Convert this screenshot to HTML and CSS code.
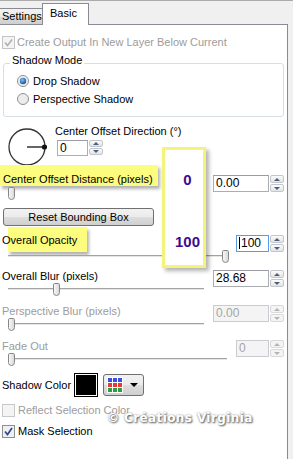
FILE: index.html
```html
<!DOCTYPE html>
<html lang="en">
  <head>
    <meta charset="UTF-8" />
    <title>Drop Shadow - Basic</title>
    <link rel="stylesheet" href="styles.css">
  </head>
  <body>
    <div class="tabs">
      <div class="tab">Settings</div>
      <div class="tab active">Basic</div>
    </div>
    <section class="panel">
      <div class="check-row disabled">
        <svg class="cb" width="13" height="13" viewBox="0 0 13 13">
          <rect x="0.5" y="0.5" width="12" height="12" fill="#f4f4f4" stroke="#c4c4c4" />
          <path d="M3 6.5l2.5 3 4.5-6" fill="none" stroke="#b0b0b0" stroke-width="1.6" />
        </svg>
        <span>Create Output In New Layer Below Current</span>
      </div>

      <fieldset class="group">
        <legend>Shadow Mode</legend>
        <div class="radio-row first">
          <svg class="rb" width="12" height="12" viewBox="0 0 12 12">
            <defs>
              <radialGradient id="dot" cx="0.4" cy="0.35" r="0.7">
                <stop offset="0" stop-color="#7ec0f5" />
                <stop offset="1" stop-color="#0d4d96" />
              </radialGradient>
            </defs>
            <circle cx="6" cy="6" r="5.5" fill="#f1f1f1" stroke="#8e8f8f" />
            <circle cx="6" cy="6" r="3.2" fill="url(#dot)" />
          </svg>
          <span>Drop Shadow</span>
        </div>
        <div class="radio-row">
          <svg class="rb" width="12" height="12" viewBox="0 0 12 12">
            <circle cx="6" cy="6" r="5.5" fill="#ececec" stroke="#8e8f8f" />
          </svg>
          <span>Perspective Shadow</span>
        </div>
      </fieldset>

      <div class="dial-row">
        <svg class="dial" width="40" height="40" viewBox="0 0 40 40">
          <circle cx="20" cy="20" r="18" fill="none" stroke="#333" stroke-width="1.3" />
          <line x1="20" y1="20" x2="38" y2="20" stroke="#333" stroke-width="1.5" />
          <circle cx="37.5" cy="20" r="2.6" fill="#111" />
        </svg>
        <div class="dial-col">
          <div>Center Offset Direction (°)</div>
          <div class="spin dial-spin">
            <div class="field w31">0</div>
            <div class="arrows"><span class="arr up"></span><span class="arr down"></span></div>
          </div>
        </div>
      </div>

      <div class="srow">
        <div class="scol">
          <div class="hl hl-dist">Center Offset Distance (pixels)</div>
          <div class="slider bare">
            <div class="thumb" style="left: 0px"></div>
          </div>
        </div>
        <div class="spin dist-spin">
          <div class="field w56">0.00</div>
          <div class="arrows"><span class="arr up"></span><span class="arr down"></span></div>
        </div>
      </div>

      <button class="btn-reset" type="button">Reset Bounding Box</button>

      <div class="srow op-row">
        <div class="scol">
          <div class="hl hl-op">Overall Opacity</div>
          <div class="slider op-slider">
            <div class="track"></div>
            <div class="thumb" style="left: 214px"></div>
          </div>
        </div>
        <div class="spin op-spin">
          <div class="field w33 focus"><span class="caret"></span>100</div>
          <div class="arrows"><span class="arr up"></span><span class="arr down"></span></div>
        </div>
      </div>

      <div class="srow blur-row">
        <div class="scol">
          <div class="slbl">Overall Blur (pixels)</div>
          <div class="slider">
            <div class="track"></div>
            <div class="thumb" style="left: 45px"></div>
          </div>
        </div>
        <div class="spin">
          <div class="field w56">28.68</div>
          <div class="arrows"><span class="arr up"></span><span class="arr down"></span></div>
        </div>
      </div>

      <div class="srow next-row disabled">
        <div class="scol">
          <div class="slbl">Perspective Blur (pixels)</div>
          <div class="slider">
            <div class="track"></div>
            <div class="thumb" style="left: 0px"></div>
          </div>
        </div>
        <div class="spin off">
          <div class="field w56">0.00</div>
          <div class="arrows"><span class="arr up"></span><span class="arr down"></span></div>
        </div>
      </div>

      <div class="srow next-row disabled">
        <div class="scol">
          <div class="slbl">Fade Out</div>
          <div class="slider">
            <div class="track"></div>
            <div class="thumb" style="left: 0px"></div>
          </div>
        </div>
        <div class="spin off">
          <div class="field w33">0</div>
          <div class="arrows"><span class="arr up"></span><span class="arr down"></span></div>
        </div>
      </div>

      <div class="color-row">
        <span class="color-lbl">Shadow Color</span>
        <div class="swatch"></div>
        <button class="pal" type="button">
          <svg width="16" height="16" viewBox="0 0 16 16">
            <rect width="16" height="16" fill="#fff" />
            <rect x="1" y="1" width="4" height="4" fill="#3d4fe0" />
            <rect x="6" y="1" width="4" height="4" fill="#3d4fe0" />
            <rect x="11" y="1" width="4" height="4" fill="#3d4fe0" />
            <rect x="1" y="6" width="4" height="4" fill="#e8383b" />
            <rect x="6" y="6" width="4" height="4" fill="#e8383b" />
            <rect x="11" y="6" width="4" height="4" fill="#e8383b" />
            <rect x="1" y="11" width="4" height="4" fill="#2f9e3c" />
            <rect x="6" y="11" width="4" height="4" fill="#2f9e3c" />
            <rect x="11" y="11" width="4" height="4" fill="#2f9e3c" />
          </svg>
          <span class="drop"></span>
        </button>
      </div>

      <div class="check-row reflect disabled">
        <svg class="cb" width="13" height="13" viewBox="0 0 13 13">
          <rect x="0.5" y="0.5" width="12" height="12" fill="#f4f4f4" stroke="#c8c8c8" />
        </svg>
        <span>Reflect Selection Color</span>
      </div>
      <div class="check-row mask">
        <svg class="cb" width="13" height="13" viewBox="0 0 13 13">
          <rect x="0.5" y="0.5" width="12" height="12" fill="#eef0f3" stroke="#8e8f8f" />
          <path d="M3 6.5l2.5 3 4.5-6.5" fill="none" stroke="#2f4a8c" stroke-width="1.7" />
        </svg>
        <span>Mask Selection</span>
      </div>

      <div class="callout">
        <div>0</div>
        <div class="v2">100</div>
      </div>
      <div class="mark">© Créations Virginia</div>
    </section>
  </body>
</html>
```

FILE: styles.css
```css
* {
  box-sizing: border-box;
}
body {
  margin: 0;
  width: 293px;
  height: 459px;
  overflow: hidden;
  display: flex;
  flex-direction: column;
  background-color: #f0f0f0;
  font-family: "Liberation Sans", Arial, sans-serif;
  font-size: 11px;
  line-height: 13px;
  color: #000;
}
.disabled {
  color: #9c9c9c;
}

/* tabs */
.tabs {
  display: flex;
  align-items: flex-end;
  height: 24px;
  border-top: 1px solid #ababab;
}
.tab {
  width: 44px;
  height: 16px;
  margin-left: -1px;
  padding-left: 2px;
  border: 1px solid #898c95;
  border-bottom: none;
  background: linear-gradient(#f2f2f2 0%, #ebebeb 50%, #dddddd 51%, #cfcfcf 100%);
  line-height: 14px;
}
.tab.active {
  position: relative;
  z-index: 1;
  width: 47px;
  height: 22px;
  margin-bottom: -1px;
  padding-left: 7px;
  background: #fff;
  line-height: 18px;
}

/* panel */
.panel {
  position: relative;
  flex: 1;
  margin: 0 5px 0 -1px;
  background: #fff;
  border: 1px solid #898c95;
  border-bottom: none;
}
.check-row {
  display: flex;
  align-items: center;
  gap: 2px;
  height: 13px;
  margin: 11px 0 0 2px;
}
.check-row.reflect {
  margin-top: 7px;
  gap: 3px;
}
.check-row.mask {
  margin-top: 8px;
  gap: 3px;
}
.cb,
.rb {
  display: block;
  flex: none;
}

.group {
  margin: 5px 3px 0 3px;
  padding: 0 0 8px 0;
  border: 1px solid #d5dfe5;
  border-radius: 3px;
}
.group legend {
  margin-left: 6px;
  padding: 0 2px 6px;
  line-height: 13px;
}
.radio-row {
  display: flex;
  align-items: center;
  gap: 4px;
  height: 18px;
  padding-left: 13px;
}
.radio-row.first {
  margin-top: -1px;
}

/* direction dial */
.dial-row {
  display: flex;
  height: 38px;
  margin-top: 10px;
}
.dial {
  display: block;
  flex: none;
  margin-left: 7px;
}
.dial-col {
  margin: -2px 0 0 8px;
}
.dial-spin {
  margin: 2px 0 0 2px;
}

/* spin boxes */
.spin {
  display: flex;
  flex: none;
  margin-right: 3px;
}
.field {
  height: 17px;
  padding-left: 2px;
  border: 1px solid #abadb3;
  border-top-color: #9a9ca3;
  background: #fff;
  font-size: 12px;
  line-height: 15px;
}
.w31 {
  width: 31px;
  height: 16px;
}
.w33 {
  width: 33px;
}
.w56 {
  width: 56px;
}
.field.focus {
  border-color: #569de5;
}
.caret {
  display: inline-block;
  width: 1px;
  height: 12px;
  margin-right: 1px;
  vertical-align: -2px;
  background: #000;
}
.arrows {
  display: flex;
  flex-direction: column;
  gap: 1px;
  width: 14px;
  margin-left: 1px;
}
.arr {
  display: flex;
  align-items: center;
  justify-content: center;
  height: 8px;
  border: 1px solid #c3c6cc;
  border-radius: 2px;
  background: linear-gradient(#fbfbfb, #e4e4e4);
}
.dial-spin .arr {
  height: 7px;
}
.arr::after {
  content: "";
  border-left: 3px solid transparent;
  border-right: 3px solid transparent;
}
.up::after {
  border-bottom: 3px solid #4d5f80;
}
.down::after {
  border-top: 3px solid #4d5f80;
}
.spin.off .field {
  background: #f4f4f4;
  border-color: #c9cbd0;
  color: #a4a4a4;
}
.spin.off .arr {
  border-color: #d8d9dc;
  background: #f4f4f4;
}
.spin.off .up::after {
  border-bottom-color: #b4b4b4;
}
.spin.off .down::after {
  border-top-color: #b4b4b4;
}

/* slider rows */
.srow {
  display: flex;
  align-items: flex-start;
}
.scol {
  flex: 1;
  padding-right: 9px;
}
.slbl {
  padding-left: 2px;
}
.dist-spin {
  margin-top: 10px;
}
.op-row {
  margin-top: 1px;
}
.op-spin {
  margin-top: 8px;
}
.blur-row {
  margin-top: 7px;
}
.next-row {
  margin-top: 9px;
}
.slider {
  position: relative;
  height: 13px;
  margin-left: 8px;
}
.slider.bare {
  margin-top: 1px;
}
.op-slider {
  margin-top: -2px;
}
.track {
  position: absolute;
  left: 0;
  right: 0;
  top: 5px;
  height: 2px;
  border-top: 1px solid #a3a3a3;
  background: #e6e6e6;
}
.thumb {
  position: absolute;
  top: 0;
  width: 7px;
  height: 13px;
  border: 1px solid #868686;
  border-radius: 2px 2px 4px 4px;
  background: linear-gradient(90deg, #f8f8f8, #d9d9d9);
}

/* yellow annotations */
.hl {
  display: block;
  width: fit-content;
  background: #fcfc7e;
  box-shadow: 2px 3px 3px rgba(0, 0, 0, 0.3);
}
.hl-dist {
  padding: 8px 5px 0 3px;
}
.hl-op {
  margin-left: 8px;
  padding: 7px 10px 5px 0;
  text-indent: -6px;
}
.callout {
  position: absolute;
  left: 162px;
  top: 122px;
  width: 44px;
  height: 121px;
  padding: 21px 0 0 7px;
  border: 3px solid #f4f47a;
  background: #fff;
  box-shadow: 3px 3px 4px rgba(0, 0, 0, 0.3);
  color: #3d0c8e;
  font-size: 15px;
  font-weight: bold;
  line-height: 18px;
  text-align: center;
}
.callout .v2 {
  margin-top: 44px;
}

/* buttons */
.btn-reset {
  display: block;
  width: 151px;
  height: 18px;
  margin: 8px 0 0 3px;
  padding: 0;
  border: 1px solid #707070;
  border-radius: 3px;
  background: linear-gradient(#f2f2f2 0%, #ebebeb 50%, #dddddd 51%, #cfcfcf 100%);
  font: inherit;
  color: #000;
}
.color-row {
  display: flex;
  align-items: center;
  height: 24px;
  margin-top: 7px;
}
.color-lbl {
  width: 72px;
  margin-left: 2px;
}
.swatch {
  width: 24px;
  height: 24px;
  border: 1px solid #000;
  background: #000;
  box-shadow: inset 0 0 0 1px #fff;
}
.pal {
  display: flex;
  align-items: center;
  width: 41px;
  height: 22px;
  margin-left: 5px;
  padding: 0 0 0 3px;
  border: 1px solid #707070;
  border-radius: 3px;
  background: linear-gradient(#f2f2f2 0%, #ebebeb 50%, #dddddd 51%, #cfcfcf 100%);
}
.pal svg {
  display: block;
}
.drop {
  margin-left: 7px;
  border-left: 4px solid transparent;
  border-right: 4px solid transparent;
  border-top: 4px solid #000;
}

/* watermark */
.mark {
  position: absolute;
  left: 107px;
  top: 385px;
  font-family: "DejaVu Sans", sans-serif;
  font-size: 12px;
  font-weight: bold;
  letter-spacing: 0.4px;
  line-height: 16px;
  color: #fff;
  text-shadow: 1px 1px 2px #555, 0 0 2px #999;
}
```
